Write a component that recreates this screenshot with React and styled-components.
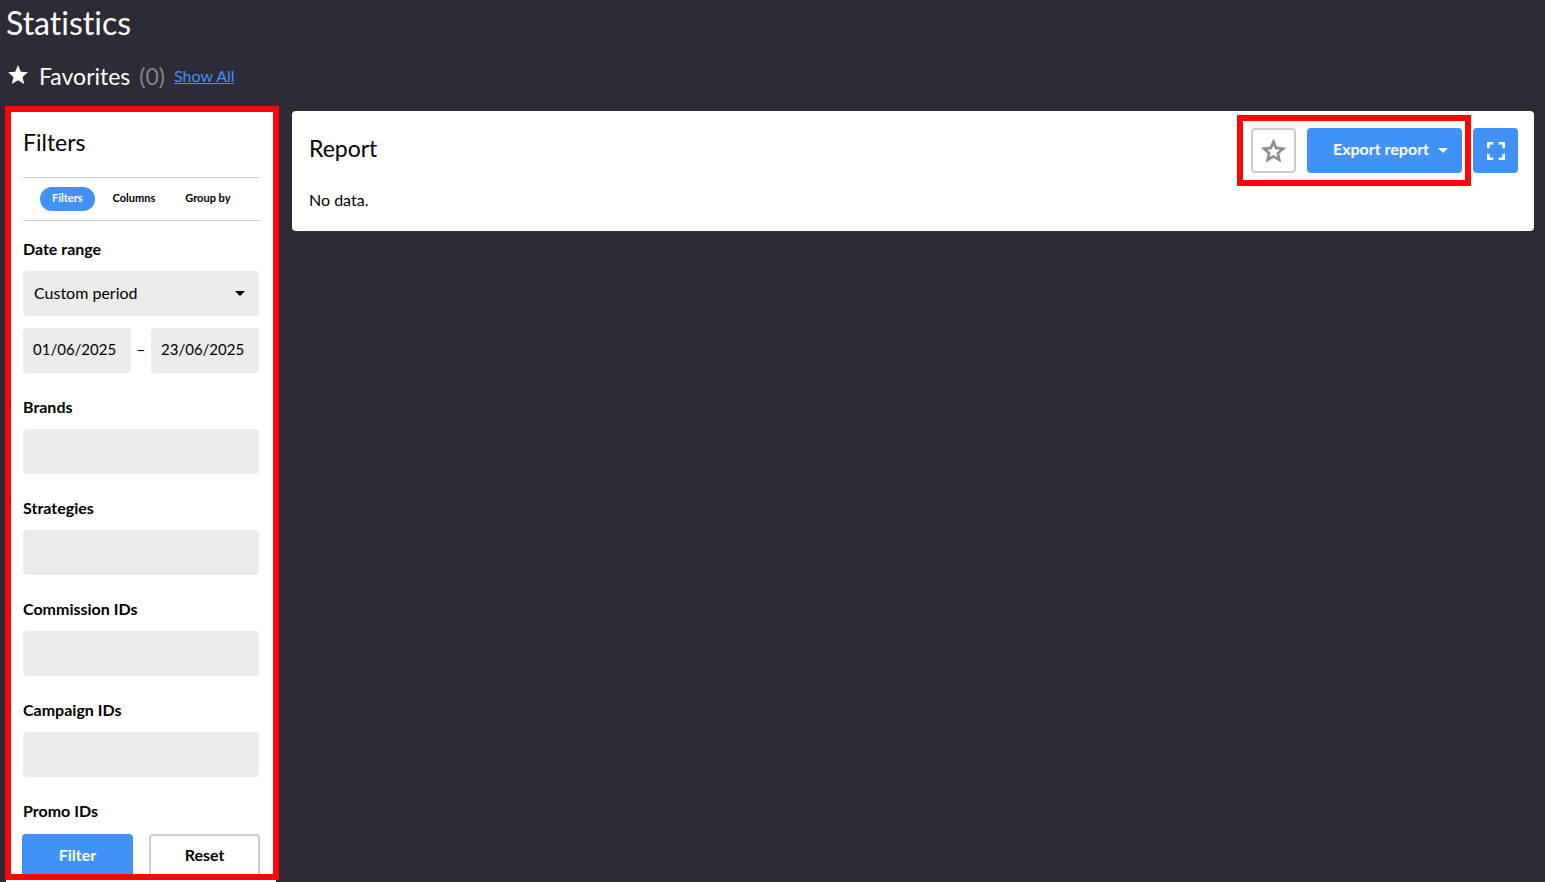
import React from 'react';
import styled, { createGlobalStyle, css } from 'styled-components';

const GlobalStyle = createGlobalStyle`
  * {
    box-sizing: border-box;
  }
  body {
    margin: 0;
    background-color: #2d2b36;
    color: #000;
    font-family: Lato, 'Liberation Sans', sans-serif;
    font-size: 16px;
    font-variant-ligatures: none;
    line-height: 20px;
  }
  button,
  input,
  select {
    font-family: inherit;
  }
`;

const Page = styled.div`
  display: flex;
  flex-direction: column;
  height: 100vh;
  padding: 0 11px 0 6px;
  overflow: hidden;
`;

const PageTitle = styled.h1`
  margin: 5px 0 0;
  color: #fff;
  font-size: 32px;
  font-weight: 400;
  line-height: 36px;
`;

const Favorites = styled.div`
  display: flex;
  align-items: center;
  height: 28px;
  margin: 21px 0;
  padding-left: 2px;
  color: #fff;
  svg {
    margin-right: 11px;
  }
  h2 {
    margin: 0;
    font-size: 23px;
    font-weight: 400;
  }
  span {
    margin: 0 9px;
    color: #85848b;
    font-size: 23px;
  }
  a {
    color: #4192f7;
    font-size: 16px;
  }
`;

const Content = styled.div`
  display: flex;
  flex: 1;
  align-items: flex-start;
  gap: 16px;
  min-height: 0;
`;

const Highlight = styled.div`
  position: absolute;
  inset: ${(props) => props.$inset};
  border: 6px solid #ff0505;
  pointer-events: none;
`;

const Sidebar = styled.aside`
  position: relative;
  display: flex;
  flex-direction: column;
  flex: 0 0 270px;
  min-width: 0;
  height: 100%;
  background-color: #fff;
`;

const SidebarBody = styled.div`
  flex: 1;
  min-height: 0;
  padding: 17px 17px 0;
  overflow: hidden;
`;

const PanelTitle = styled.h2`
  margin: 0;
  font-size: 23px;
  font-weight: 400;
  line-height: 28px;
`;

const Tabs = styled.div`
  display: flex;
  align-items: center;
  gap: 6px;
  height: 44px;
  margin: 21px 0 18px;
  padding-left: 17px;
  border-top: 1px solid #ccc;
  border-bottom: 1px solid #ccc;
`;

const Tab = styled.button`
  height: 24px;
  padding: 0 12px 3px;
  border: 0;
  border-radius: 12px;
  background-color: ${(props) => (props.$active ? '#4192f7' : 'transparent')};
  color: ${(props) => (props.$active ? '#fff' : '#000')};
  font-size: 11px;
  font-weight: 700;
  white-space: nowrap;
`;

const Group = styled.div`
  display: flex;
  flex-direction: column;
  gap: 12px;
  margin-bottom: 24px;
`;

const Label = styled.label`
  font-size: 16px;
  font-weight: 700;
  line-height: 20px;
`;

const field = css`
  width: 100%;
  min-width: 0;
  height: 45px;
  padding: 0 11px 2px;
  border: 0;
  border-radius: 4px;
  background-color: #ebebeb;
  color: #000;
  font-size: 16px;
`;

const Input = styled.input`
  ${field}
`;

const DateInput = styled.input`
  ${field}
  padding: 0 10px 3px;
  font-size: 15px;
`;

const SelectBox = styled.div`
  display: grid;
  align-items: center;
  > * {
    grid-area: 1 / 1;
  }
  svg {
    justify-self: end;
    margin-right: 14px;
    pointer-events: none;
  }
`;

const Select = styled.select`
  ${field}
  appearance: none;
`;

const DateRow = styled.div`
  display: grid;
  grid-template-columns: 1fr 20px 1fr;
  align-items: center;
  text-align: center;
  span {
    padding-bottom: 4px;
  }
`;

const Button = styled.button`
  display: flex;
  align-items: center;
  justify-content: center;
  height: 45px;
  padding: ${(props) => (props.$icon ? '0' : '0 0 4px')};
  border: ${(props) => (props.$primary ? '0' : '2px solid #ccc')};
  border-radius: 4px;
  background-color: ${(props) => (props.$primary ? '#4192f7' : '#fff')};
  color: ${(props) => (props.$primary ? '#fff' : '#000')};
  font-size: 16px;
  font-weight: 700;
`;

const IconButton = styled(Button)`
  width: 45px;
`;

const StarButton = styled(IconButton)`
  color: #8a8a8a;
`;

const ExportButton = styled(Button)`
  gap: 9px;
  width: 155px;
  padding-left: 12px;
  svg {
    margin-top: 4px;
  }
`;

const SidebarFooter = styled.div`
  display: grid;
  grid-template-columns: 1fr 1fr;
  gap: 16px;
  padding: 1px 16px 3px;
`;

const Report = styled.main`
  flex: 1;
  min-width: 0;
  padding: 17px 16px 21px 17px;
  border-radius: 4px;
  background-color: #fff;
  p {
    margin: 17px 0 0;
  }
`;

const ReportHeader = styled.div`
  display: flex;
  align-items: flex-start;
  justify-content: space-between;
  h2 {
    margin-top: 6px;
  }
`;

const Actions = styled.div`
  position: relative;
  display: flex;
  gap: 11px;
`;

const Caret = () => (
  <svg width='10' height='5' viewBox='0 0 10 5' fill='currentColor' aria-hidden='true'>
    <path d='M0 0h10L5 5z' />
  </svg>
);

const Star = () => (
  <svg width='20' height='20' viewBox='2 3 20 20' fill='currentColor' aria-hidden='true' overflow='visible'>
    <path d='M12 17.27L18.18 21l-1.64-7.03L22 9.24l-7.19-.61L12 2 9.19 8.63 2 9.24l5.46 4.73L5.82 21z' />
  </svg>
);

const StarOutline = () => (
  <svg width='25' height='25' viewBox='2 1.5 20 20' fill='currentColor' stroke='currentColor' strokeWidth='.5' aria-hidden='true'>
    <path d='M21.6 9.4l-7-.7L12 2.4 9.4 8.7l-7 .7 5.3 4.6-1.6 6.7 5.9-3.6 5.9 3.6-1.6-6.7 5.3-4.6zM12 15.2l-3.5 2.1.93-4-3.1-2.7 4.1-.35L12 6.5l1.57 3.75 4.1.35-3.1 2.7.93 4L12 15.2z' />
  </svg>
);

const Fullscreen = () => (
  <svg width='18' height='18' viewBox='0 0 18 18' fill='none' stroke='currentColor' strokeWidth='2.6' aria-hidden='true'>
    <path d='M1.3 6.3v-5h5M11.7 1.3h5v5M16.7 11.7v5h-5M6.3 16.7h-5v-5' />
  </svg>
);

const filters = [
  { id: 'brands', label: 'Brands' },
  { id: 'strategies', label: 'Strategies' },
  { id: 'commissions', label: 'Commission IDs' },
  { id: 'campaigns', label: 'Campaign IDs' },
  { id: 'promos', label: 'Promo IDs' },
];

const FiltersPanel = () => {
  return (
    <Sidebar>
      <SidebarBody>
        <PanelTitle>Filters</PanelTitle>
        <Tabs>
          <Tab type='button' $active>
            Filters
          </Tab>
          <Tab type='button'>Columns</Tab>
          <Tab type='button'>Group by</Tab>
        </Tabs>
        <Group>
          <Label htmlFor='period'>Date range</Label>
          <SelectBox>
            <Select id='period'>
              <option>Custom period</option>
            </Select>
            <Caret />
          </SelectBox>
          <DateRow>
            <DateInput aria-label='Date from' defaultValue='01/06/2025' />
            <span>–</span>
            <DateInput aria-label='Date to' defaultValue='23/06/2025' />
          </DateRow>
        </Group>
        {filters.map((item) => (
          <Group key={item.id}>
            <Label htmlFor={item.id}>{item.label}</Label>
            <Input id={item.id} />
          </Group>
        ))}
      </SidebarBody>
      <SidebarFooter>
        <Button type='button' $primary>
          Filter
        </Button>
        <Button type='button'>Reset</Button>
      </SidebarFooter>
      <Highlight $inset='-5px -3px 2px -1px' />
    </Sidebar>
  );
};

const ReportPanel = () => {
  return (
    <Report>
      <ReportHeader>
        <PanelTitle>Report</PanelTitle>
        <Actions>
          <Actions>
            <StarButton type='button' $icon aria-label='Add to favorites'>
              <StarOutline />
            </StarButton>
            <ExportButton type='button' $primary>
              Export report
              <Caret />
            </ExportButton>
            <Highlight $inset='-13px -9px -13px -14px' />
          </Actions>
          <IconButton type='button' $primary $icon aria-label='Fullscreen'>
            <Fullscreen />
          </IconButton>
        </Actions>
      </ReportHeader>
      <p>No data.</p>
    </Report>
  );
};

const App = () => {
  return (
    <>
      <GlobalStyle />
      <Page>
        <PageTitle>Statistics</PageTitle>
        <Favorites>
          <Star />
          <h2>Favorites</h2>
          <span>(0)</span>
          <a href='#favorites'>Show All</a>
        </Favorites>
        <Content>
          <FiltersPanel />
          <ReportPanel />
        </Content>
      </Page>
    </>
  );
};

export default App;
